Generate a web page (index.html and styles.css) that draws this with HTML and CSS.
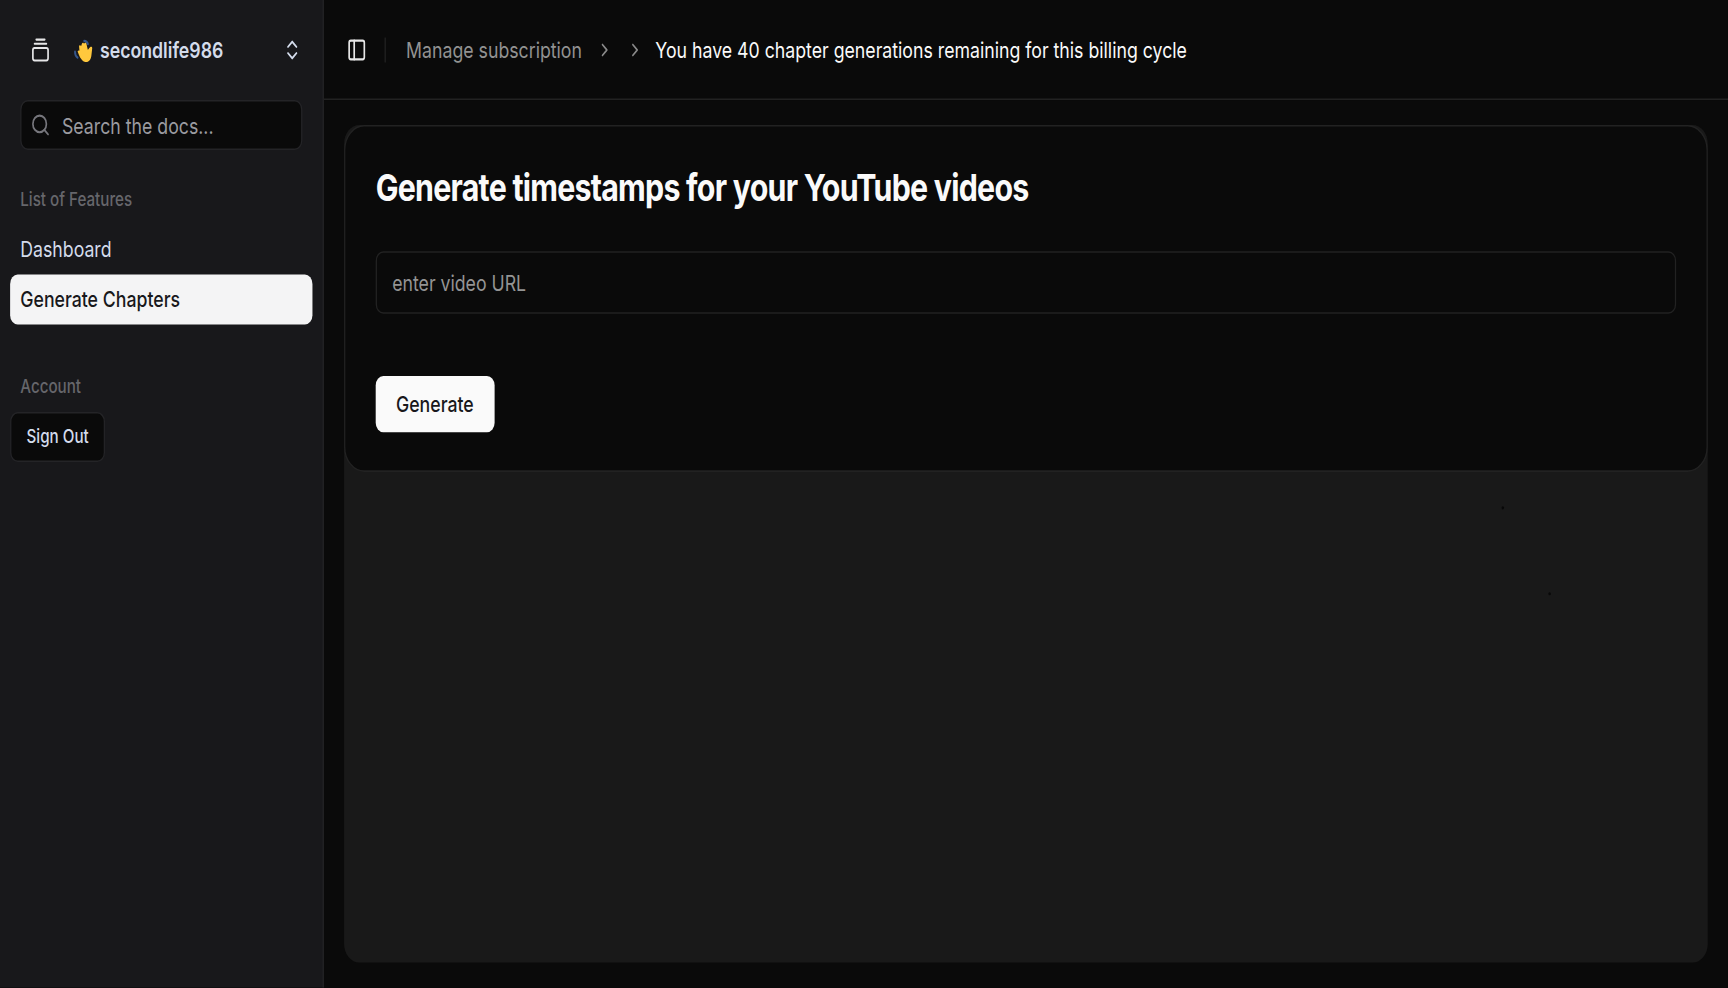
FILE: index.html
```html
<!DOCTYPE html>
<html lang="en">
<head>
<meta charset="utf-8">
<title>Generate Chapters</title>
<link rel="stylesheet" href="styles.css">
</head>
<body>
<div class="app">
  <aside class="sidebar">
    <div class="team">
      <span class="team-logo">
        <svg class="icon" viewBox="0 0 24 24"><path d="M7 2h10"/><path d="M5 6h14"/><rect width="18" height="12" x="3" y="10" rx="2"/></svg>
      </span>
      <svg class="wave" viewBox="0 0 16 16" preserveAspectRatio="none">
        <path d="M1.300 8.600c0 2 .7 3.200 2 4.100M8.600 1.300c1.500.1 2.500.9 2.900 2.200" fill="none" stroke="#35568c" stroke-width="1.500" stroke-linecap="round"/>
        <path d="M3.500 8.900C3 8 4.200 7.400 4.800 8L4.500 5.100c0-1 1.200-1.100 1.600-.2L6.800 3c.4-.9 1.500-.6 1.600.2l.5-.5c.7-.5 1.400 0 1.500.8l1 3.800c.8-.2 1.300-1.600 2.200-2 .9-.2 1.400.3 1.300 1l-.6 4.500c-.3 2.900-1.900 4.900-4.600 4.900-2.600 0-4.600-2.900-6.200-6.800z" fill="#ffc83d"/>
      </svg>
      <span class="team-name">secondlife986</span>
      <svg class="icon team-toggle" viewBox="0 0 24 24"><path d="m7 15 5 5 5-5"/><path d="m7 9 5-5 5 5"/></svg>
    </div>
    <label class="search">
      <svg class="icon" viewBox="0 0 24 24"><circle cx="11" cy="11" r="8"/><path d="m21 21-4.300-4.300"/></svg>
      <span class="search-text">Search the docs...</span>
    </label>
    <nav class="group">
      <div class="group-label"><span>List of Features</span></div>
      <a class="item"><span>Dashboard</span></a>
      <a class="item item-active"><span>Generate Chapters</span></a>
    </nav>
    <div class="group">
      <div class="group-label"><span>Account</span></div>
      <button class="sign-out">Sign Out</button>
    </div>
  </aside>
  <main class="main">
    <header class="topbar">
      <svg class="icon panel-icon" viewBox="0 0 24 24"><rect width="18" height="18" x="3" y="3" rx="2"/><path d="M9 3v18"/></svg>
      <span class="separator"></span>
      <span class="crumb">Manage subscription</span>
      <svg class="icon chevron" viewBox="0 0 24 24"><path d="m9 18 6-6-6-6"/></svg>
      <svg class="icon chevron chevron-last" viewBox="0 0 24 24"><path d="m9 18 6-6-6-6"/></svg>
      <span class="crumb-current">You have 40 chapter generations remaining for this billing cycle</span>
    </header>
    <div class="content">
      <section class="panel">
        <div class="card">
          <h1 class="title"><span>Generate timestamps for your YouTube videos</span></h1>
          <div class="field"><span class="field-text">enter video URL</span></div>
          <button class="generate">Generate</button>
        </div>
        <i class="speck speck-a"></i>
        <i class="speck speck-b"></i>
      </section>
    </div>
  </main>
</div>
</body>
</html>
```
FILE: styles.css
```css
* { box-sizing: border-box; }
html, body { margin: 0; width: 1728px; height: 988px; overflow: hidden; background: #0a0a0a; }
.app {
  display: flex;
  width: 1366px;
  height: 632.3px;
  transform: scale(1.265, 1.5626);
  transform-origin: 0 0;
  background: #0a0a0a;
  color: #fafafa;
  font: 14px/20px Inter, "Liberation Sans", sans-serif;
}
.icon {
  width: 16px; height: 16px; flex: none;
  fill: none; stroke: currentColor; stroke-width: 2;
  stroke-linecap: round; stroke-linejoin: round;
}
button { font: inherit; margin: 0; }
.sidebar { width: 256px; flex: none; background: #18181b; border-right: 1px solid #242427; color: #d4dcec; }
.team { display: flex; align-items: center; height: 64px; padding: 0 16px; }
.team-logo { display: flex; justify-content: center; width: 32px; margin-right: 10px; color: #e6e6e8; }
.wave { width: 16px; height: 15px; margin-right: 5px; }
.team-name { font-weight: 600; }
.team-toggle { margin-left: auto; }
.search {
  display: flex; align-items: center; height: 32px; margin: 0 16px; padding: 0 7px;
  border: 1px solid #242427; border-radius: 6px; background: #0a0a0a; color: #76767c;
}
.search-text { margin: 1px 0 0 9px; color: #9b9ba0; }
.group { padding: 8px; margin-top: 8px; transform: translateY(-0.3px); }
.group-label { height: 32px; padding: 0 8px; font-size: 12px; line-height: 32px; font-weight: 500; color: #66666b; }
.item { display: block; height: 32px; padding: 0 8px; border-radius: 6px; line-height: 32px; }
.item-active { background: #f4f4f5; color: #18181b; font-weight: 500; }
.sign-out {
  height: 32px; padding: 0 12px; border: 1px solid #242427; border-radius: 6px;
  background: #0a0a0a; color: #d4dcec; font-size: 12px; font-weight: 500;
}
.main { flex: 1; display: flex; flex-direction: column; min-width: 0; }
.topbar { display: flex; align-items: center; height: 64px; flex: none; padding-left: 18px; border-bottom: 1px solid #222; }
.panel-icon { color: #e6e6e6; }
.separator { width: 1px; height: 16px; margin: 0 16px 0 14px; background: #222; }
.crumb { color: #929292; margin-right: 10.800px; }
.chevron { width: 14px; height: 14px; margin-right: 10px; color: #8a8a8a; }
.chevron-last { margin-right: 9.200px; }
.content { flex: 1; padding: 16px; }
.panel { position: relative; height: 100%; border-radius: 12px; background: #191919; }
.card { height: 221.500px; padding: 24px 24px 0; border: 1px solid #222; border-radius: 16px; background: #0a0a0a; }
.title { margin: 0; font-size: 24px; line-height: 32px; font-weight: 700; letter-spacing: -0.6px; transform: translateY(-0.5px); }
.field { display: flex; align-items: center; height: 40px; margin-top: 24px; padding: 0 12px; border: 1px solid #222; border-radius: 6px; color: #949494; transform: translateY(-0.2px); }
.field-text { transform: translateY(0.6px); }
.generate { display: block; height: 36px; margin-top: 40px; padding: 0 16px; border: 0; border-radius: 6px; background: #fafafa; color: #18181b; font-weight: 500; transform: translateY(-0.4px); }
.speck { position: absolute; width: 2px; height: 2px; border-radius: 50%; background: #080808; }
.speck-a { left: 915px; top: 244px; }
.speck-b { left: 952px; top: 299px; }
```
